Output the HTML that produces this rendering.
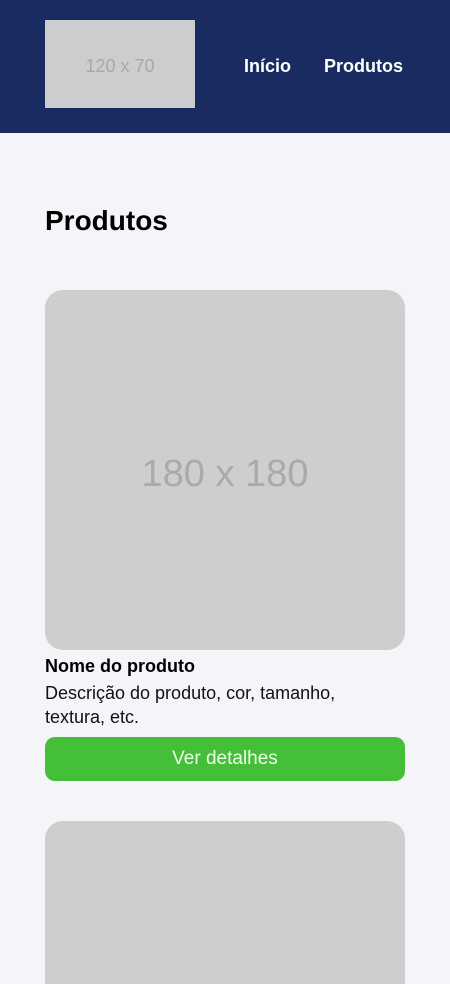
<!DOCTYPE html>
<html><head><style>
*{margin:0;padding:0;box-sizing:border-box}
html,body{width:450px;height:984px;overflow:hidden}
body{background:#f5f5f9;font-family:"Liberation Sans",Arial,sans-serif;position:relative}
header{height:133px;background:#1a2b61;position:relative}
.logo{position:absolute;left:45px;top:20px;width:150px;height:88px;background:#cdcdcd;color:#a8a8a8;font-size:18px;display:flex;align-items:center;justify-content:center;padding-top:4px}
.nav{position:absolute;top:56px;color:#fff;font-weight:bold;font-size:18px}
h1{position:absolute;left:45px;top:205px;font-size:28px;color:#000}
.img{position:absolute;left:45px;width:360px;height:360px;background:#cecece;border-radius:18px;color:#aaa;font-size:38px;display:flex;align-items:center;justify-content:center;padding-top:8px}
.name{position:absolute;left:45px;top:656px;font-weight:bold;font-size:18px}
.desc{position:absolute;left:45px;top:681px;font-size:18px;line-height:24px;width:320px;color:#111}
.btn{position:absolute;left:45px;top:737px;width:360px;height:44px;background:#45be38;border-radius:10px;color:#eaffe6;font-size:19px;display:flex;align-items:center;justify-content:center}
</style></head><body>
<header><div class="logo">120 x 70</div><div class="nav" style="left:244px">Início</div><div class="nav" style="left:324px">Produtos</div></header>
<h1>Produtos</h1>
<div class="img" style="top:290px">180 x 180</div>
<div class="name">Nome do produto</div>
<div class="desc">Descrição do produto, cor, tamanho, textura, etc.</div>
<div class="btn">Ver detalhes</div>
<div class="img" style="top:821px;height:163px;border-radius:18px 18px 0 0"></div>
</body></html>
